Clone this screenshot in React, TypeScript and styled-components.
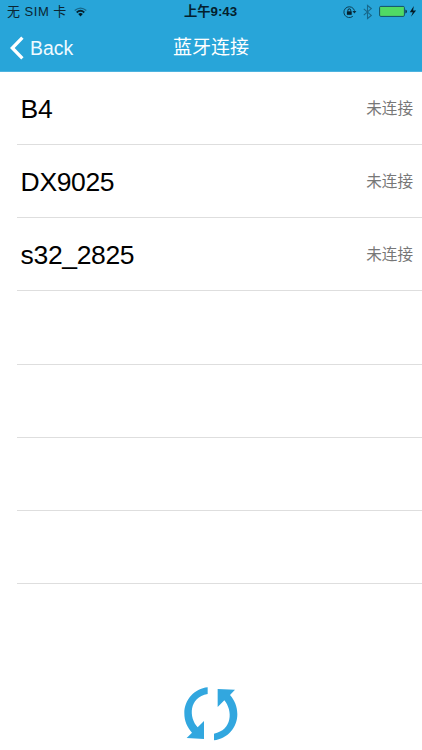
import React from 'react';
import styled, { createGlobalStyle } from 'styled-components';

const GlobalStyle = createGlobalStyle`
  * { box-sizing: border-box; }
  body { margin: 0; background: #fff; }
`;

const Screen = styled.main`
  width: 422px;
  height: 750px;
  display: flex;
  flex-direction: column;
  overflow: hidden;
  background: #fff;
  color: #000;
  font-family: "Liberation Sans", "Noto Sans CJK SC", sans-serif;
`;

const Header = styled.header`
  height: 72px;
  flex: none;
  background: #28a5d9;
  border-bottom: 1px solid #4db3df;
`;

const StatusBar = styled.div`
  height: 24px;
  display: grid;
  grid-template-columns: 1fr auto 1fr;
  align-items: center;
  padding: 0 5px 0 7px;
  line-height: 24px;
  color: #0b2632;
`;

const Carrier = styled.div`
  display: flex;
  align-items: center;
  gap: 7px;
  font-size: 13px;
  letter-spacing: 0.5px;
  white-space: pre;
`;

const Clock = styled.div`
  margin-right: 3px;
  font-size: 13.3px;
  font-weight: 700;
  color: #04202d;
`;

const Indicators = styled.div`
  display: flex;
  align-items: center;
  justify-content: flex-end;
`;

const NavBar = styled.div`
  height: 47px;
  display: grid;
  grid-template-columns: 1fr auto 1fr;
  align-items: center;
  padding: 0 10px;
  color: #fff;
`;

const BackButton = styled.button`
  display: flex;
  align-items: center;
  gap: 6px;
  padding: 0;
  border: 0;
  background: none;
  color: #f0faff;
  font: 19.4px/24px "Liberation Sans", sans-serif;
`;

const Title = styled.h1`
  margin: 0;
  font-size: 19px;
  font-weight: 400;
  line-height: 24px;
`;

const DeviceList = styled.ul`
  flex: 1;
  margin: 0;
  padding: 0 0 0 17px;
  list-style: none;
`;

const DeviceRow = styled.li`
  height: 73.15px;
  display: flex;
  align-items: center;
  justify-content: space-between;
  padding: 1px 9px 0 3.6px;
  border-bottom: 1px solid #dedede;
`;

const DeviceName = styled.span`
  font-size: 26.5px;
  letter-spacing: -0.35px;
  line-height: 32px;
`;

const DeviceState = styled.span`
  font-size: 15.6px;
  line-height: 24px;
  color: #777;
`;

const Footer = styled.footer`
  height: 75px;
  flex: none;
  display: flex;
  justify-content: center;
  padding-right: 2px;
`;

const RefreshButton = styled.button`
  width: 80px;
  height: 75px;
  padding: 0;
  border: 0;
  background: none;
  svg { display: block; }
`;

const WifiIcon = () => (
  <svg width="13" height="10" viewBox="0 0 13 10" fill="none">
    <path d="M.7 3.6Q6.5-1.4 12.3 3.6" stroke="#17678a" strokeWidth="1.3" />
    <path d="M2.7 5.5Q6.5 2 10.3 5.5" stroke="#062533" strokeWidth="1.7" />
    <path d="M4.2 7Q6.5 5.1 8.8 7L6.5 9.4Z" fill="#031b26" />
  </svg>
);

const StatusIcons = () => (
  <svg width="75" height="18" viewBox="0 0 75 18" fill="none">
    <path d="M10.8 13.3A5.4 5.4 0 1 1 12.5 7.7" stroke="#0b3d54" strokeWidth="1" />
    <path d="M10.4 7.9h4l-2 2.6Z" fill="#0b3040" />
    <rect x="4.9" y="8.3" width="4.8" height="3.5" fill="#06202c" />
    <path d="M5.9 8.4V7.3a1.4 1.4 0 0 1 2.8 0v1.1" stroke="#06202c" />
    <path d="M21.8 5.8 29.3 12.4 25.5 15.5V2.5L29.3 5.6 21.8 12.2" stroke="#17678a" strokeWidth="1.1" />
    <rect x="37.6" y="3.4" width="24.8" height="10" rx="1.2" fill="#50da65" stroke="#14516a" />
    <path d="M63.4 6.5v4q1.6-.4 1.6-2t-1.6-2Z" fill="#0b3040" />
    <path d="M71.8 3 67.8 9.2h3L69 13.7 74.1 7.5h-3Z" fill="#041b26" />
  </svg>
);

const BackIcon = () => (
  <svg width="14" height="24" viewBox="0 0 14 24" fill="none">
    <path d="M12.4 1.7 2.3 12l10.1 10.3" stroke="#fff" strokeWidth="3.3" />
  </svg>
);

const RefreshIcon = () => (
  <svg width="80" height="75" viewBox="0 0 240 225" fill="#32a7df">
    <path d="M113 37C73 41 43 75 43 115c0 23 8 41 23 58L50 189l52 3v-54l-19 19C56 127 56 68 113 57Z" />
    <path d="M132 196c40-4 70-38 70-78 0-23-8-42-22-58l15-16-52-2v54l20-20c26 31 24 90-31 100Z" />
  </svg>
);

const devices = ['B4', 'DX9025', 's32_2825', '', '', '', ''];

export default function App() {
  return (
    <>
      <GlobalStyle />
      <Screen>
        <Header>
          <StatusBar>
            <Carrier>无 SIM 卡<WifiIcon /></Carrier>
            <Clock>上午9:43</Clock>
            <Indicators><StatusIcons /></Indicators>
          </StatusBar>
          <NavBar>
            <BackButton><BackIcon />Back</BackButton>
            <Title>蓝牙连接</Title>
          </NavBar>
        </Header>
        <DeviceList>
          {devices.map((name, i) => (
            <DeviceRow key={i}>
              {name && (
                <>
                  <DeviceName>{name}</DeviceName>
                  <DeviceState>未连接</DeviceState>
                </>
              )}
            </DeviceRow>
          ))}
        </DeviceList>
        <Footer>
          <RefreshButton aria-label="Refresh"><RefreshIcon /></RefreshButton>
        </Footer>
      </Screen>
    </>
  );
}
